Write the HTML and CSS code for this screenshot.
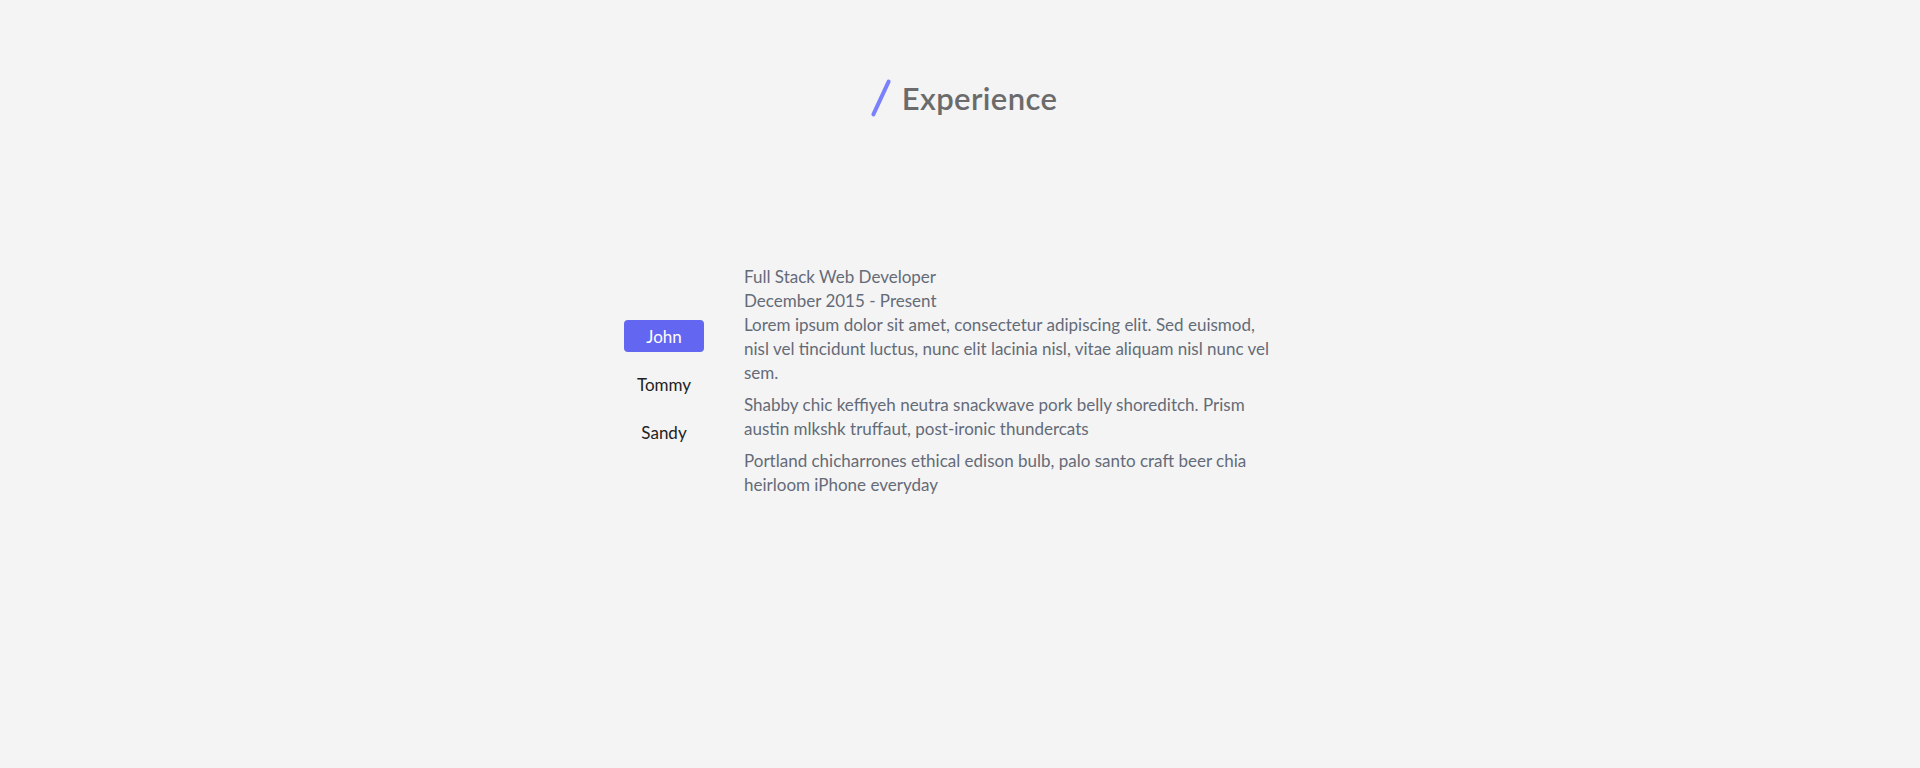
FILE: index.html
```html
<!DOCTYPE html>
<html lang="en">
<head>
<meta charset="utf-8">
<title>Experience</title>
<link rel="stylesheet" href="styles.css">
</head>
<body>
<section class="experience">
  <h2 class="title"><span class="slash"></span>Experience</h2>
  <div class="content">
    <div class="tabs">
      <button class="tab active">John</button>
      <button class="tab">Tommy</button>
      <button class="tab">Sandy</button>
    </div>
    <div class="details">
      <p class="line">Full Stack Web Developer</p>
      <p class="line">December 2015 - Present</p>
      <p class="para">Lorem ipsum dolor sit amet, consectetur adipiscing elit. Sed euismod, nisl vel tincidunt luctus, nunc elit lacinia nisl, vitae aliquam nisl nunc vel sem.</p>
      <p class="para">Shabby chic keffiyeh neutra snackwave pork belly shoreditch. Prism austin mlkshk truffaut, post-ironic thundercats</p>
      <p class="para">Portland chicharrones ethical edison bulb, palo santo craft beer chia heirloom iPhone everyday</p>
    </div>
  </div>
</section>
</body>
</html>
```
FILE: styles.css
```css
* { box-sizing: border-box; }
html, body {
  margin: 0;
  padding: 0;
  background: #f4f4f4;
  font-family: Lato, "Noto Sans", sans-serif;
}
.experience {
  display: flex;
  flex-direction: column;
  align-items: center;
  padding-top: 76px;
  height: 768px;
}
.title {
  display: flex;
  align-items: center;
  gap: 19px;
  margin: 0 0 0 16px;
  font-size: 31px;
  font-weight: 600;
  letter-spacing: 0.4px;
  color: #6b6b6b;
  line-height: 44px;
}
.slash {
  display: inline-block;
  width: 4px;
  height: 40px;
  background: #7b80fc;
  border-radius: 2px;
  transform: rotate(25deg);
}
.content {
  display: flex;
  align-items: center;
  gap: 40px;
  margin-top: 145px;
  margin-right: 22px;
}
.tabs {
  display: flex;
  flex-direction: column;
  gap: 16px;
  width: 80px;
  margin-top: 6px;
}
.tab {
  height: 32px;
  width: 80px;
  border: 0;
  border-radius: 4px;
  background: transparent;
  font-family: inherit;
  font-size: 17px;
  color: #222;
  padding: 0;
  cursor: pointer;
}
.tab.active {
  background: #6366f1;
  color: #fff;
}
.details {
  width: 530px;
  color: #646b78;
  font-size: 17px;
  line-height: 24px;
}
.details p { margin: 0; }
.details .para { margin-bottom: 8px; }
.details .para:last-child { margin-bottom: 0; }
```
